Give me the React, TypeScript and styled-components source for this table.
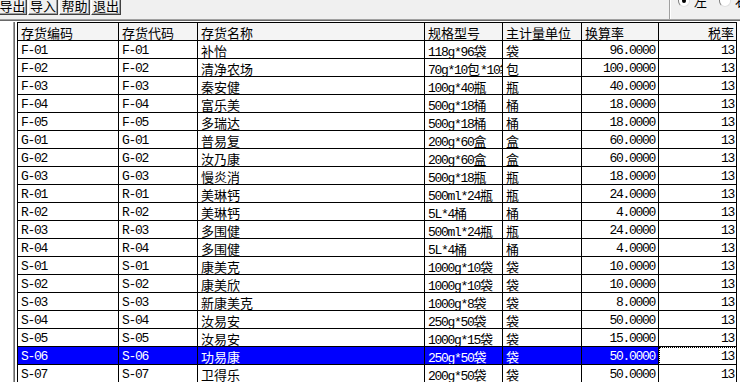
import React from 'react';
import styled, { createGlobalStyle } from 'styled-components';

const GlobalStyle = createGlobalStyle`
  html, body { margin: 0; padding: 0; }
  body {
    background: #f0f0f0;
    font-family: "Liberation Mono", "Noto Sans CJK SC", monospace;
  }
`;

const Window = styled.div`
  width: 740px;
  height: 382px;
  overflow: hidden;
  display: flex;
  flex-direction: column;
  background: #f0f0f0;
`;

const TopBar = styled.div`
  height: 19px;
  flex: none;
  display: flex;
  justify-content: space-between;
  overflow: hidden;
`;

const ButtonRow = styled.div`
  display: flex;
  gap: 1px;
  margin: -4px 0 0 -2px;
  align-items: flex-start;
`;

const ToolButton = styled.button<{ $w: number }>`
  width: ${(p) => p.$w}px;
  height: 19px;
  box-sizing: border-box;
  margin: 0;
  padding: 0;
  background: #f0f0f0;
  color: #000;
  font-family: "Noto Sans CJK SC", sans-serif;
  font-size: 13px;
  line-height: 15px;
  border: 1px solid;
  border-color: #ffffff #404040 #404040 #ffffff;
  box-shadow: inset -1px -1px #a0a0a0;
`;

const RightPanel = styled.div`
  width: 71px;
  height: 19px;
  box-sizing: border-box;
  border-left: 1px solid #a0a0a0;
  box-shadow: inset 1px 0 #ffffff;
  padding-left: 8px;
  overflow: hidden;
`;

const RadioGroup = styled.div`
  display: flex;
  align-items: center;
  height: 14px;
  margin-top: -6px;
  gap: 12px;
`;

const RadioLabel = styled.label`
  display: flex;
  align-items: center;
  gap: 4px;
  font-family: "Noto Sans CJK SC", sans-serif;
  font-size: 13px;
  line-height: 14px;
  color: #000;
  white-space: nowrap;
`;

const RadioCircle = styled.span<{ $on?: boolean }>`
  width: 12px;
  height: 12px;
  box-sizing: border-box;
  border-radius: 50%;
  border: 1px solid;
  border-color: #808080 #e0e0e0 #e0e0e0 #808080;
  background: #ffffff;
  display: flex;
  align-items: center;
  justify-content: center;
  &::after {
    content: '';
    width: 4px;
    height: 4px;
    border-radius: 50%;
    background: ${(p) => (p.$on ? '#000' : 'transparent')};
  }
`;

const Separator = styled.div`
  height: 1px;
  flex: none;
  border-top: 1px solid #a0a0a0;
  border-bottom: 1px solid #ffffff;
  background: #696969;
`;

const Body = styled.div`
  flex: 1;
  min-height: 0;
  display: flex;
  background: #ffffff;
  overflow: hidden;
`;

const LeftPane = styled.div`
  width: 13px;
  flex: none;
  background: #ffffff;
`;

const Divider = styled.div`
  width: 1px;
  flex: none;
  border-left: 1px solid #a0a0a0;
  background: #696969;
  margin-right: 2px;
`;

const Grid = styled.div`
  display: flex;
  flex-direction: column;
  border-left: 1px solid #000;
  border-top: 1px solid #000;
  align-self: flex-start;
`;

const Row = styled.div<{ $head?: boolean; $selected?: boolean }>`
  display: grid;
  grid-template-columns: 101px 79px 227px 78px 79px 77px 78px;
  background: ${(p) => (p.$selected ? '#0000ff' : p.$head ? '#f4f4f4' : '#ffffff')};
  color: ${(p) => (p.$selected ? '#ffffff' : '#000000')};
`;

const Cell = styled.div<{ $align?: 'left' | 'right'; $pr?: number; $focus?: boolean }>`
  height: 18px;
  box-sizing: border-box;
  border-right: 1px solid #000;
  border-bottom: 1px solid #000;
  padding: 3px ${(p) => p.$pr ?? 3}px 0 3px;
  font-size: 13px;
  line-height: 14px;
  letter-spacing: -1.3px;
  white-space: nowrap;
  overflow: hidden;
  text-align: ${(p) => p.$align ?? 'left'};
  ${(p) =>
    p.$focus
      ? `background: #ffffff; color: #000000; outline: 1px dotted #000; outline-offset: -1px;`
      : ''}
`;

const Han = styled.span`
  letter-spacing: 0;
  font-family: "Noto Sans CJK SC", sans-serif;
`;

const HAN_RE = /([\u3400-\u9fff]+)/;

const renderText = (s: string) =>
  s
    .split(HAN_RE)
    .filter(Boolean)
    .map((part, i) =>
      HAN_RE.test(part) ? <Han key={i}>{part}</Han> : <React.Fragment key={i}>{part}</React.Fragment>
    );

type Item = [string, string, string, string, string, string, string];

const items: Item[] = [
  ['F-01', 'F-01', '补怡', '118g*96袋', '袋', '96.0000', '13'],
  ['F-02', 'F-02', '清净农场', '70g*10包*10袋', '包', '100.0000', '13'],
  ['F-03', 'F-03', '秦安健', '100g*40瓶', '瓶', '40.0000', '13'],
  ['F-04', 'F-04', '富乐美', '500g*18桶', '桶', '18.0000', '13'],
  ['F-05', 'F-05', '多瑞达', '500g*18桶', '桶', '18.0000', '13'],
  ['G-01', 'G-01', '普易复', '200g*60盒', '盒', '60.0000', '13'],
  ['G-02', 'G-02', '汝乃康', '200g*60盒', '盒', '60.0000', '13'],
  ['G-03', 'G-03', '慢炎消', '500g*18瓶', '瓶', '18.0000', '13'],
  ['R-01', 'R-01', '美琳钙', '500ml*24瓶', '瓶', '24.0000', '13'],
  ['R-02', 'R-02', '美琳钙', '5L*4桶', '桶', '4.0000', '13'],
  ['R-03', 'R-03', '多围健', '500ml*24瓶', '瓶', '24.0000', '13'],
  ['R-04', 'R-04', '多围健', '5L*4桶', '桶', '4.0000', '13'],
  ['S-01', 'S-01', '康美克', '1000g*10袋', '袋', '10.0000', '13'],
  ['S-02', 'S-02', '康美欣', '1000g*10袋', '袋', '10.0000', '13'],
  ['S-03', 'S-03', '新康美克', '1000g*8袋', '袋', '8.0000', '13'],
  ['S-04', 'S-04', '汝易安', '250g*50袋', '袋', '50.0000', '13'],
  ['S-05', 'S-05', '汝易安', '1000g*15袋', '袋', '15.0000', '13'],
  ['S-06', 'S-06', '功易康', '250g*50袋', '袋', '50.0000', '13'],
  ['S-07', 'S-07', '卫得乐', '200g*50袋', '袋', '50.0000', '13'],
];

const SELECTED = 'S-06';

const buttons: { label: string; w: number }[] = [
  { label: '导出', w: 29 },
  { label: '导入', w: 30 },
  { label: '帮助', w: 31 },
  { label: '退出', w: 30 },
];

export default function App() {
  return (
    <>
      <GlobalStyle />
      <Window>
        <TopBar>
          <ButtonRow>
            {buttons.map((b) => (
              <ToolButton key={b.label} $w={b.w}>
                {b.label}
              </ToolButton>
            ))}
          </ButtonRow>
          <RightPanel>
            <RadioGroup>
              <RadioLabel>
                <RadioCircle $on />
                左
              </RadioLabel>
              <RadioLabel>
                <RadioCircle />
                右
              </RadioLabel>
            </RadioGroup>
          </RightPanel>
        </TopBar>
        <Separator />
        <Body>
          <LeftPane />
          <Divider />
          <Grid>
            <Row $head>
              <Cell>{renderText('存货编码')}</Cell>
              <Cell>{renderText('存货代码')}</Cell>
              <Cell>{renderText('存货名称')}</Cell>
              <Cell>{renderText('规格型号')}</Cell>
              <Cell>{renderText('主计量单位')}</Cell>
              <Cell>{renderText('换算率')}</Cell>
              <Cell $align="right" $pr={2}>
                {renderText('税率')}
              </Cell>
            </Row>
            {items.map((it) => {
              const sel = it[0] === SELECTED;
              return (
                <Row key={it[0]} $selected={sel}>
                  <Cell>{renderText(it[0])}</Cell>
                  <Cell>{renderText(it[1])}</Cell>
                  <Cell>{renderText(it[2])}</Cell>
                  <Cell>{renderText(it[3])}</Cell>
                  <Cell>{renderText(it[4])}</Cell>
                  <Cell $align="right">{renderText(it[5])}</Cell>
                  <Cell $align="right" $pr={2} $focus={sel}>
                    {renderText(it[6])}
                  </Cell>
                </Row>
              );
            })}
          </Grid>
        </Body>
      </Window>
    </>
  );
}
